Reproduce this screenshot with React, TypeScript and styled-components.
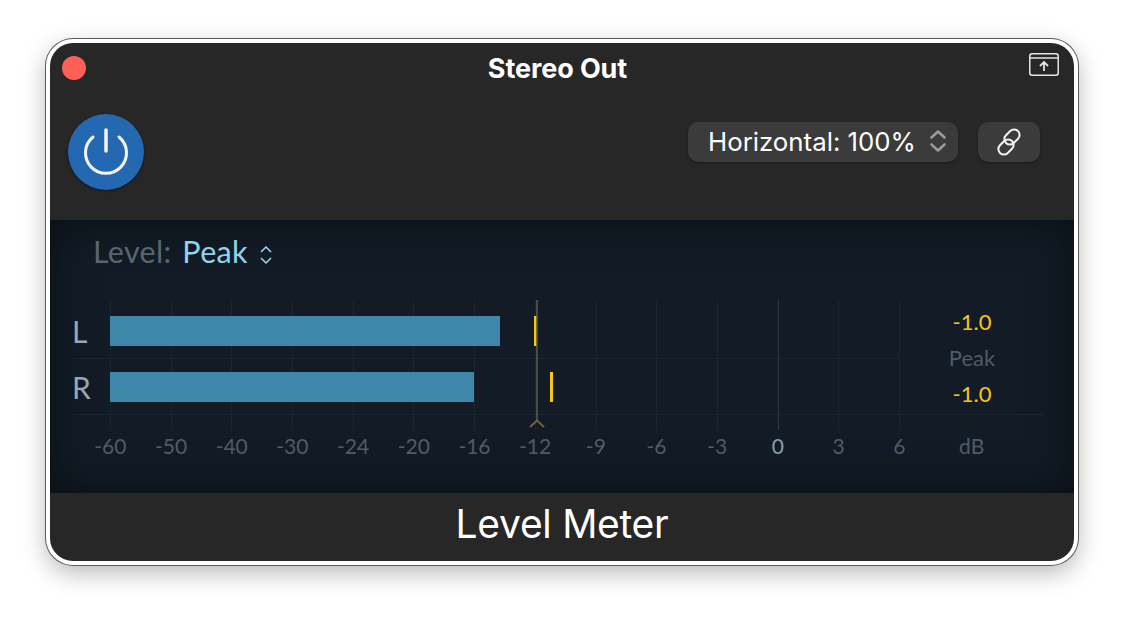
import React from 'react';
import styled, { createGlobalStyle } from 'styled-components';

const SCALE = ['-60', '-50', '-40', '-30', '-24', '-20', '-16', '-12', '-9', '-6', '-3', '0', '3', '6'];
const STEP = 60.7;

const CHANNELS = [
    { name: 'L', level: 390, peak: 424 },
    { name: 'R', level: 364, peak: 440 },
];

const GlobalStyle = createGlobalStyle`
    html, body {
        margin: 0;
        background: #fff;
    }
`;

const Page = styled.div`
    padding: 39px 0 0 46px;
    height: 620px;
    box-sizing: border-box;
    overflow: hidden;
    font-family: Inter, "Liberation Sans", sans-serif;
`;

const Window = styled.div`
    width: 1032px;
    height: 526px;
    box-sizing: border-box;
    border: 4px solid #fff;
    border-radius: 27px;
    background: #272727;
    overflow: hidden;
    display: flex;
    flex-direction: column;
    box-shadow: 0 0 0 1px #5a5a5a, 0 8px 24px rgba(0, 0, 0, 0.28);
`;

const Header = styled.header`
    height: 177px;
    flex: none;
`;

const TitleBar = styled.div`
    height: 50px;
    display: grid;
    grid-template-columns: 1fr auto 1fr;
    align-items: center;
    padding: 0 15px 0 12px;
`;

const CloseDot = styled.span`
    width: 24px;
    height: 24px;
    border-radius: 50%;
    background: #fe5f57;
`;

const Title = styled.div`
    font-size: 27px;
    font-weight: 700;
    color: #fff;
    letter-spacing: -0.1px;
    margin-right: 6px;
`;

const ExportButton = styled.svg`
    width: 30px;
    height: 24px;
    justify-self: end;
    margin-top: -6px;
`;

const Controls = styled.div`
    margin-top: 21px;
    display: flex;
    justify-content: space-between;
    padding: 0 34px 0 18px;
`;

const PowerButton = styled.div`
    width: 76px;
    height: 76px;
    border-radius: 50%;
    background: #2468b2;
    box-shadow: 0 1px 3px rgba(0, 0, 0, 0.45);
`;

const ControlGroup = styled.div`
    display: flex;
    gap: 20px;
    height: 40px;
    margin-top: 8px;
`;

const SelectButton = styled.div`
    width: 270px;
    box-sizing: border-box;
    border-radius: 10px;
    background: #3b3b3b;
    box-shadow: 0 1px 2px rgba(0, 0, 0, 0.4);
    color: #fff;
    font-size: 25.8px;
    display: flex;
    align-items: center;
    justify-content: space-between;
    padding: 0 11px 2px 20px;
`;

const IconButton = styled.div`
    width: 62px;
    border-radius: 10px;
    background: #3b3b3b;
    box-shadow: 0 1px 2px rgba(0, 0, 0, 0.4);
    display: flex;
    align-items: center;
    justify-content: center;
`;

const MeterPanel = styled.section`
    height: 273px;
    flex: none;
    box-sizing: border-box;
    background: #131c26;
    box-shadow: inset 0 0 46px rgba(6, 10, 14, 0.75);
    padding-left: 22px;
    font-family: Lato, "Open Sans", sans-serif;
`;

const LevelRow = styled.div`
    height: 80px;
    box-sizing: border-box;
    padding: 13px 0 0 21px;
    display: flex;
    align-items: flex-start;
    font-size: 30.5px;
    line-height: 36px;
    letter-spacing: 0.3px;
`;

const LevelLabel = styled.span`
    color: #59656f;
    margin-right: 11px;
`;

const LevelValue = styled.span`
    color: #8fd3f0;
    margin-right: 11px;
`;

const LevelChevrons = styled.svg`
    width: 14px;
    height: 20px;
    margin-top: 12px;
`;

const Meter = styled.div`
    position: relative;
    width: 980px;
    height: 130px;
    padding-top: 3px;
    box-sizing: border-box;
`;

const GridLines = styled.div`
    position: absolute;
    left: 38px;
    top: 0;
    bottom: 0;
    display: flex;
`;

const GridLine = styled.span<{ $zero: boolean }>`
    width: ${STEP}px;
    box-sizing: border-box;
    border-left: 1px solid ${props => (props.$zero ? '#2f3a44' : '#1b2530')};
`;

const Lane = styled.div<{ $wide: boolean }>`
    position: relative;
    height: 56px;
    width: ${props => (props.$wide ? '972px' : '828px')};
    box-sizing: border-box;
    display: flex;
    align-items: center;
    border-bottom: 1px solid #1b2530;
`;

const ChannelName = styled.span`
    width: 38px;
    box-sizing: border-box;
    font-size: 30px;
    color: #97a8b0;
`;

const Bar = styled.div`
    height: 30px;
    background: #3f86ab;
`;

const PeakMark = styled.span`
    position: absolute;
    top: 13px;
    height: 30px;
    width: 3px;
    background: #f7c815;
`;

const Threshold = styled.svg`
    position: absolute;
    left: 455px;
    top: 0;
    width: 20px;
    height: 130px;
`;

const Readouts = styled.div`
    position: absolute;
    left: 851px;
    top: 8px;
    width: 98px;
    display: flex;
    flex-direction: column;
    align-items: center;
    gap: 9px;
    font-size: 22px;
    line-height: 27px;
`;

const Readout = styled.span`
    color: #f5c518;
`;

const ReadoutCaption = styled.span`
    color: #4f5b65;
`;

const TickRow = styled.div`
    display: flex;
    margin-left: 8px;
    font-size: 21px;
    line-height: 32px;
`;

const Tick = styled.span<{ $zero: boolean }>`
    width: ${STEP}px;
    text-align: center;
    color: ${props => (props.$zero ? '#8d9da6' : '#4f5b65')};
`;

const Unit = styled.span`
    margin-left: 12px;
    width: 60px;
    text-align: center;
    color: #4f5b65;
`;

const Footer = styled.footer`
    flex: 1;
    display: flex;
    align-items: center;
    justify-content: center;
    color: #fff;
    font-size: 39px;
    letter-spacing: -0.3px;
    padding-bottom: 7px;
`;

const App = () => (
    <Page>
        <GlobalStyle />
        <Window>
            <Header>
                <TitleBar>
                    <CloseDot />
                    <Title>Stereo Out</Title>
                    <ExportButton viewBox="0 0 30 24" fill="none" stroke="#e4e4e4" strokeWidth="1.5">
                        <rect x="0.75" y="0.75" width="28.5" height="21.5" rx="2.5" />
                        <path d="M1 5H29" />
                        <path d="M15 18V9.5M11 13L15 9L19 13" strokeWidth="1.8" />
                    </ExportButton>
                </TitleBar>
                <Controls>
                    <PowerButton>
                        <svg width="76" height="76" viewBox="0 0 76 76" fill="none" stroke="#f2f6fa" strokeWidth="3" strokeLinecap="round">
                            <path d="M25 23A20.5 20.5 0 1 0 51 23" />
                            <path d="M38 16V37" strokeWidth="3.5" />
                        </svg>
                    </PowerButton>
                    <ControlGroup>
                        <SelectButton>
                            Horizontal: 100%
                            <svg width="18" height="24" viewBox="0 0 18 24" fill="none" stroke="#9a9a9a" strokeWidth="2.6" strokeLinecap="round" strokeLinejoin="round">
                                <path d="M2.5 8.5L9 2.5L15.5 8.5" />
                                <path d="M2.5 15.5L9 21.5L15.5 15.5" />
                            </svg>
                        </SelectButton>
                        <IconButton>
                            <svg width="28" height="28" viewBox="0 0 28 28" fill="none" stroke="#f4f4f4" strokeWidth="2">
                                <rect x="11.5" y="0.5" width="11" height="17" rx="5.5" transform="rotate(45 17 9)" />
                                <rect x="5.5" y="10.5" width="11" height="17" rx="5.5" transform="rotate(45 11 19)" />
                            </svg>
                        </IconButton>
                    </ControlGroup>
                </Controls>
            </Header>
            <MeterPanel>
                <LevelRow>
                    <LevelLabel>Level:</LevelLabel>
                    <LevelValue>Peak</LevelValue>
                    <LevelChevrons viewBox="0 0 14 20" fill="none" stroke="#9fdcf5" strokeWidth="1.5">
                        <path d="M2 7L7 2L12 7" />
                        <path d="M2 13L7 18L12 13" />
                    </LevelChevrons>
                </LevelRow>
                <Meter>
                    <GridLines>
                        {SCALE.map(tick => (
                            <GridLine key={tick} $zero={tick === '0'} />
                        ))}
                    </GridLines>
                    {CHANNELS.map((channel, index) => (
                        <Lane key={channel.name} $wide={index === 1}>
                            <ChannelName>{channel.name}</ChannelName>
                            <Bar style={{ width: channel.level }} />
                            <PeakMark style={{ left: 38 + channel.peak }} />
                        </Lane>
                    ))}
                    <Threshold viewBox="0 0 20 130" fill="none" stroke="#5c5a42" strokeWidth="1.6">
                        <path d="M10 0V120" />
                        <path d="M3 127L10 120.5L17 127" stroke="#6b6640" strokeWidth="2" />
                    </Threshold>
                    <Readouts>
                        <Readout>-1.0</Readout>
                        <ReadoutCaption>Peak</ReadoutCaption>
                        <Readout>-1.0</Readout>
                    </Readouts>
                </Meter>
                <TickRow>
                    {SCALE.map(tick => (
                        <Tick key={tick} $zero={tick === '0'}>{tick}</Tick>
                    ))}
                    <Unit>dB</Unit>
                </TickRow>
            </MeterPanel>
            <Footer>Level Meter</Footer>
        </Window>
    </Page>
);

export default App;
